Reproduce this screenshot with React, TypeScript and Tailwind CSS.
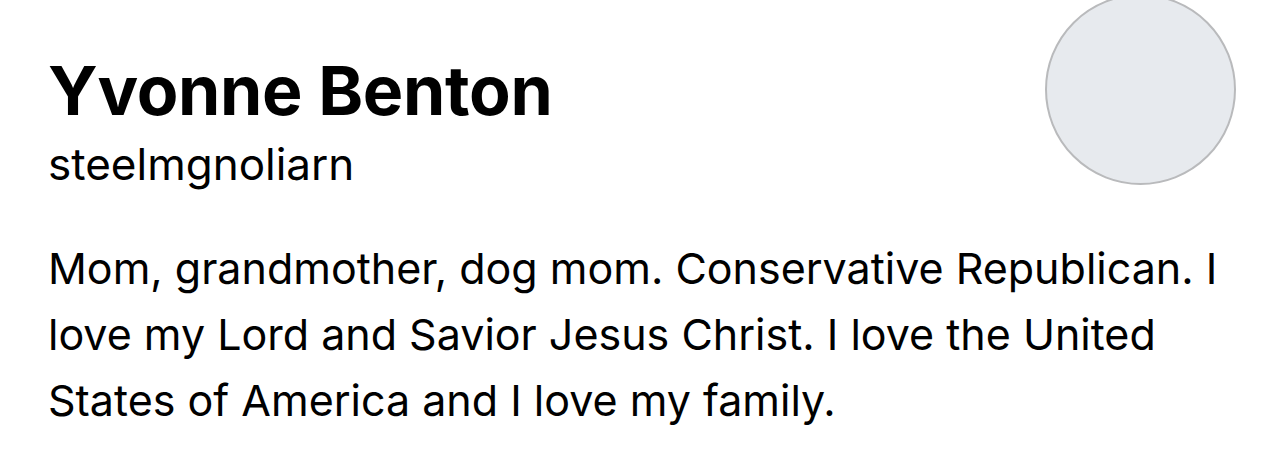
const App = () => {
  return (
    <div className="w-[1284px] h-[452px] bg-white overflow-hidden font-['Inter',sans-serif] text-black">
      <div className="flex justify-between pl-[48px] pr-[48px]">
        <div className="pt-[52px]">
          <h1 className="text-[68px] font-bold leading-[76px] tracking-[-0.3px]">Yvonne Benton</h1>
          <p className="text-[44px] leading-[52px] mt-[10px]">steelmgnoliarn</p>
        </div>
        <div className="size-[191px] mt-[-6px] shrink-0 rounded-full bg-[#e7eaee] border-2 border-[#b9babc]" />
      </div>
      <p className="px-[48px] mt-[45px] text-[43px] leading-[66px] max-w-[1270px]">
        Mom, grandmother, dog mom. Conservative Republican. I love my Lord and Savior Jesus Christ. I love the United
        States of America and I love my family.
      </p>
    </div>
  );
};

export default App;
